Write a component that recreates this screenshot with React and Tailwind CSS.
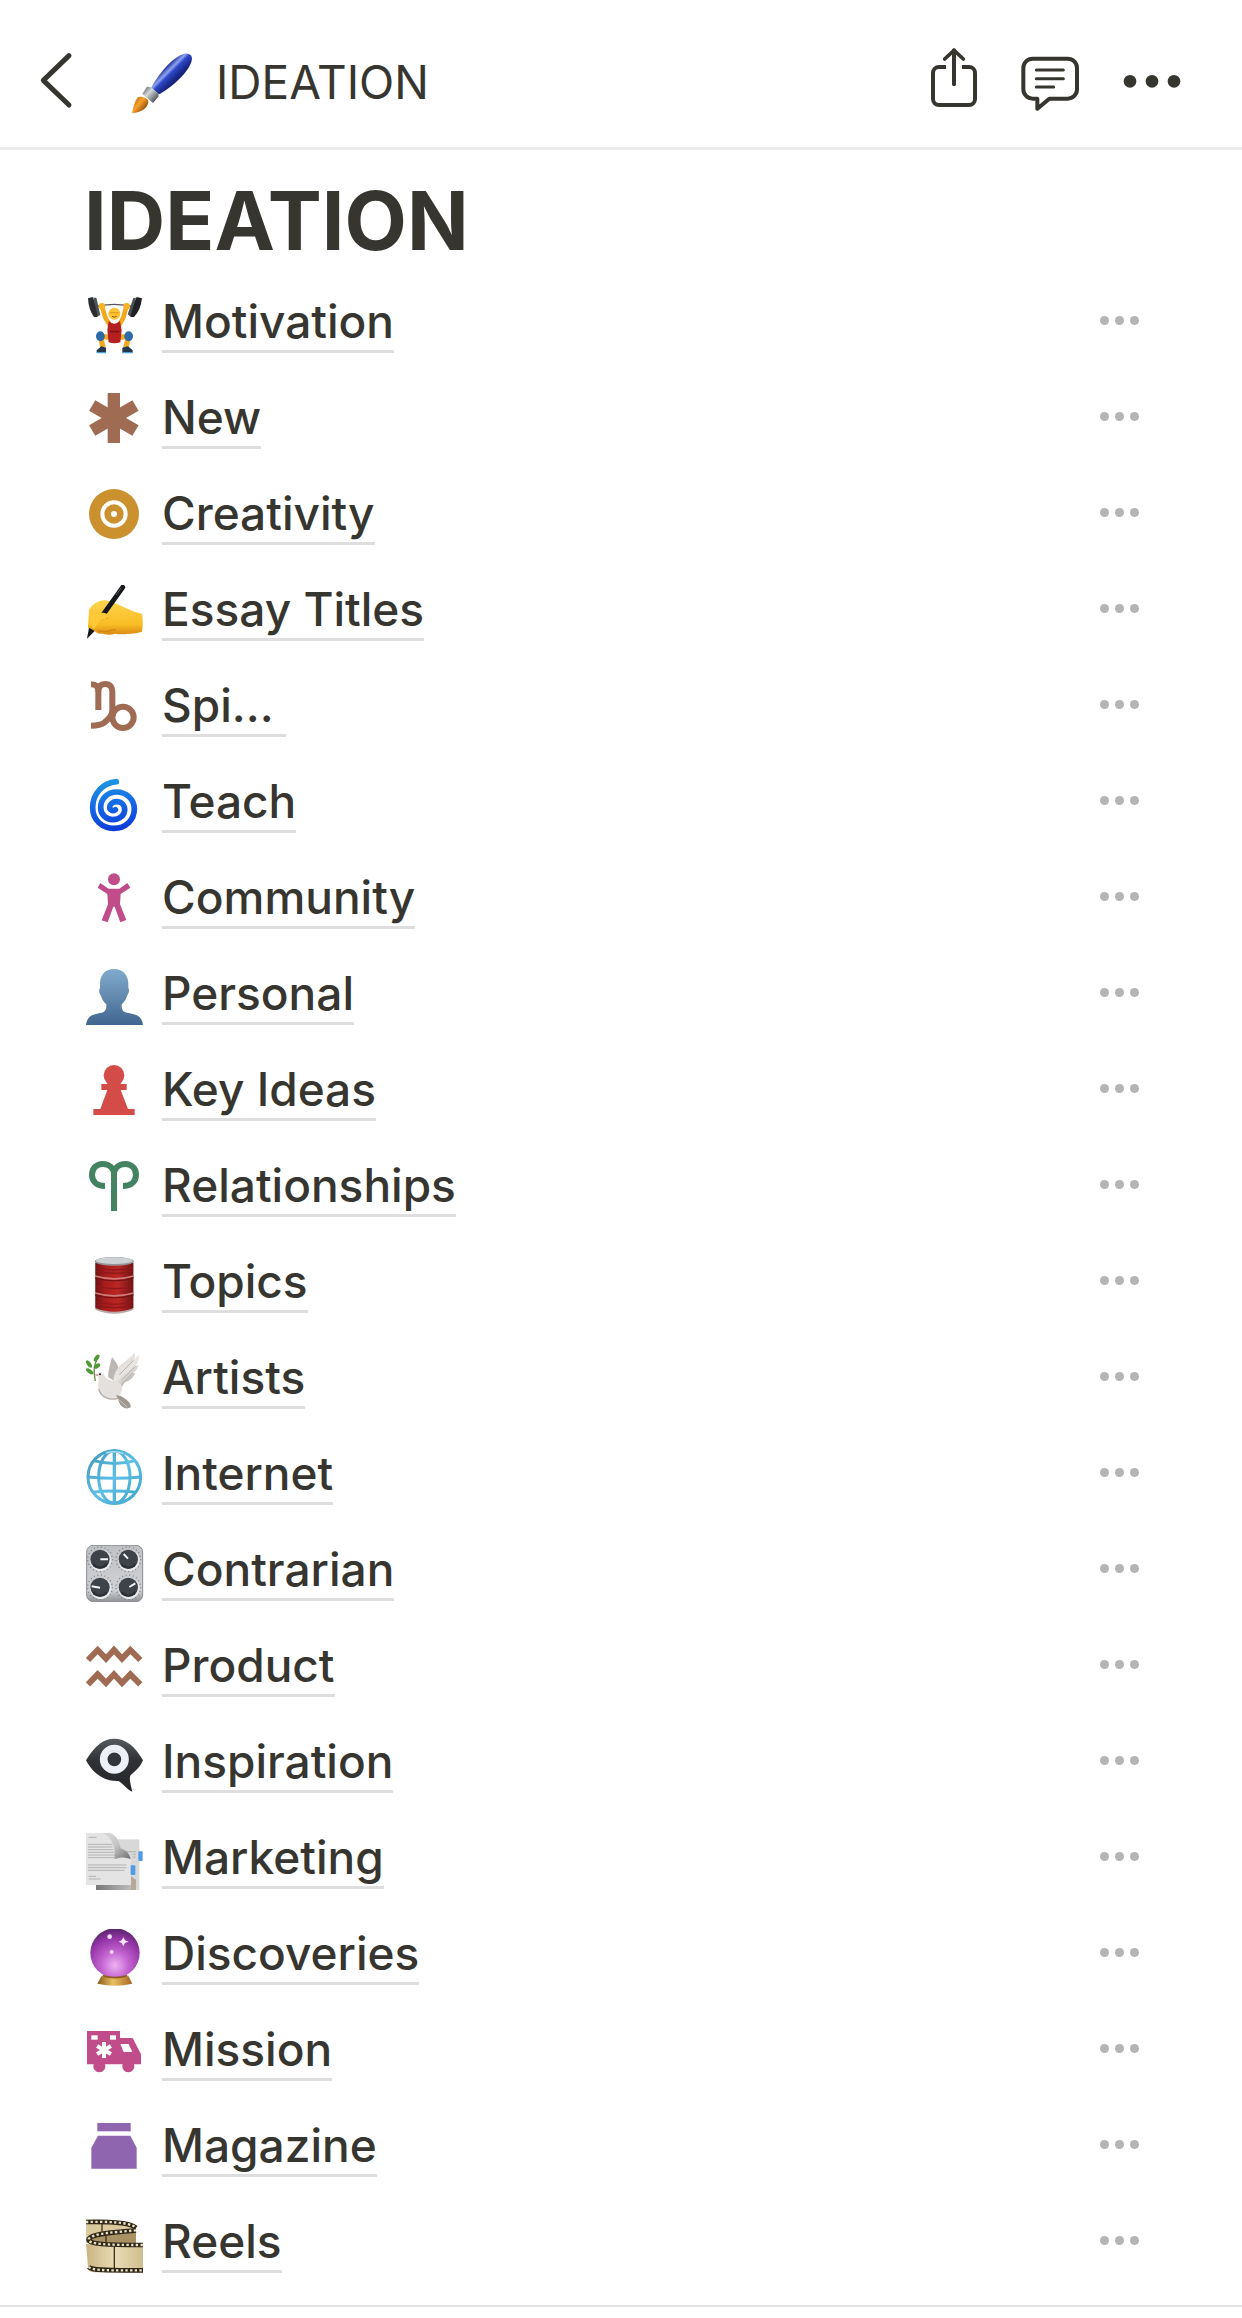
import React from 'react';

const Lifter = () => (
  <>
    <path d="M20 30 Q84 14 150 30" stroke="#55585c" strokeWidth="4" fill="none" />
    <path d="M6 4 L20 0 L40 50 L34 60 L24 60 Q8 40 6 4 Z" fill="#2b2d30" />
    <path d="M22 2 L31 2 L43 54 L35 58 Z" fill="#4d5054" />
    <path d="M168 4 L152 0 L128 50 L134 60 L144 60 Q164 40 168 4 Z" fill="#1f2123" />
    <path d="M150 2 L142 3 L125 52 L133 58 Z" fill="#4d5054" />
    <path d="M49 32 L58 62 L76 92 M120 32 L112 62 L95 92" stroke="#f2a91f" strokeWidth="14" fill="none" />
    <circle cx="48" cy="28" r="10" fill="#f5b325" />
    <circle cx="122" cy="28" r="10" fill="#f5b325" />
    <circle cx="85" cy="50" r="18" fill="#fcc434" />
    <path d="M72 47 H98" stroke="#e09a1a" strokeWidth="3" />
    <path d="M78 58 Q85 63 92 58" stroke="#8a5a10" strokeWidth="3" fill="none" />
    <path d="M46 118 L76 122 M126 118 L96 122 M45 122 L51 154 M127 122 L119 154" stroke="#f2a91f" strokeWidth="16" />
    <path d="M68 72 Q85 88 102 72 L107 100 L103 136 Q85 142 68 136 L64 100 Z" fill="#b4201f" />
    <path d="M72 104 H100" stroke="#7e1213" strokeWidth="5" />
    <ellipse cx="43" cy="118" rx="13" ry="15" fill="#2c6ba8" />
    <ellipse cx="128" cy="118" rx="13" ry="15" fill="#2c6ba8" />
    <path d="M32 160 L46 148 L60 152 V167 H32 Z M140 160 L126 148 L109 152 V167 H140 Z" fill="#22384f" />
    <path d="M32 167 H60 M109 167 H140" stroke="#4d9fd8" strokeWidth="4" />
  </>
);

const Asterisk = () => (
  <g fill="#9f6b53">
    <rect x="65" y="0" width="37" height="150" />
    <rect x="65" y="0" width="37" height="150" transform="rotate(60 83.500 75)" />
    <rect x="65" y="0" width="37" height="150" transform="rotate(-60 83.500 75)" />
  </g>
);

const Target = () => (
  <>
    <circle cx="84" cy="75" r="75" fill="#cb912f" />
    <circle cx="84" cy="75" r="35" fill="none" stroke="#fff" strokeWidth="12" />
    <circle cx="84" cy="75" r="9" fill="#fff" />
  </>
);

const WritingHand = () => (
  <>
    <defs>
      <linearGradient id="hand" x1="0" y1="0" x2="0" y2="1">
        <stop offset="0" stopColor="#ffd44d" />
        <stop offset="0.7" stopColor="#f9bd25" />
        <stop offset="1" stopColor="#d98b14" />
      </linearGradient>
    </defs>
    <path
      d="M9 76 C14 62 30 50 52 46 C66 44 90 56 108 64 C126 72 150 84 168 86 C171 104 171 124 168 140 C150 146 110 150 88 146 C76 150 62 150 52 146 C40 148 32 144 26 138 L6 128 Z"
      fill="url(#hand)"
    />
    <path d="M36 136 C50 146 70 136 90 134 M26 118 C38 104 50 102 66 98" stroke="#cf8616" strokeWidth="4" fill="none" />
    <path d="M110 7 L52 88" stroke="#15171a" strokeWidth="15" strokeLinecap="round" fill="none" />
    <path d="M9 128 L26 138 L3 161 Z" fill="#15171a" />
    <path d="M106 8 L90 30" stroke="#585b60" strokeWidth="3" />
    <path d="M14 88 C30 92 38 80 56 84 C74 88 70 102 50 104 C38 108 32 118 25 132 C14 126 10 108 14 88 Z" fill="#fdc936" />
  </>
);

const Capricorn = () => (
  <g fill="none" stroke="#9f6b53" strokeWidth="18">
    <path d="M15 10 C30 10 37 16 37 32 V87" />
    <path d="M37 32 C37 16 45 9 57 9 C72 9 79 18 79 32 V88 C79 106 66 116 56 124 C44 133 34 134 15 134" />
    <circle cx="111" cy="109" r="32" />
  </g>
);

const Cyclone = () => (
  <>
    <defs>
      <linearGradient id="cyclone" gradientUnits="userSpaceOnUse" x1="60" y1="5" x2="84" y2="162">
        <stop offset="0" stopColor="#1c9ae0" />
        <stop offset="0.5" stopColor="#1668e6" />
        <stop offset="1" stopColor="#0b3bd8" />
      </linearGradient>
    </defs>
    <path
      d="M91 14 C50 18 20 50 20 92 C20 130 50 154 83 154 C120 154 145 128 145 96 C145 66 120 45 92 45 C64 45 44 66 44 92 C44 114 62 128 80 128 C102 128 116 114 116 98 C116 84 106 74 92 74 C80 74 71 82 71 91 C71 99 80 104 88 98"
      fill="none"
      stroke="url(#cyclone)"
      strokeWidth="17"
      strokeLinecap="round"
    />
  </>
);

const Person = () => (
  <g fill="#c14c8a">
    <circle cx="84" cy="19" r="18" />
    <path d="M35 44 L43 30 L68 47 H100 L124 30 L133 44 L104 63 L102 94 L121 141 L103 148 L86 101 H82 L65 148 L47 142 L66 94 L64 63 Z" />
  </g>
);

const Bust = () => (
  <>
    <defs>
      <linearGradient id="bust" x1="0" y1="0" x2="0" y2="1">
        <stop offset="0" stopColor="#80abcc" />
        <stop offset="0.5" stopColor="#6489ae" />
        <stop offset="1" stopColor="#3f6590" />
      </linearGradient>
    </defs>
    <path
      d="M84 0 C110 0 127 18 127 44 V58 C131 60 129 74 123 80 C120 92 114 100 107 106 C106 120 110 128 122 131 C146 135 168 138 171 168 H0 C3 138 24 135 48 131 C58 128 62 120 61 106 C54 100 48 92 45 80 C39 74 38 60 42 58 V44 C42 18 58 0 84 0 Z"
      fill="url(#bust)"
    />
  </>
);

const Pawn = () => (
  <g fill="#d44c47">
    <circle cx="84" cy="31" r="31" />
    <path d="M64 50 H104 V57 H122 V75 H104 L126 132 H146 V150 H22 V132 H43 L64 75 H46 V57 H64 Z" />
  </g>
);

const Aries = () => (
  <g fill="none" stroke="#448361" strokeWidth="18">
    <path d="M57 75 C34 75 18 62 18 41 C18 22 32 9 50 9 C70 9 84 22 84 42 V150" />
    <path d="M111 75 C134 75 150 62 150 41 C150 22 136 9 118 9 C98 9 84 22 84 42" />
  </g>
);

const OilDrum = () => (
  <>
    <defs>
      <linearGradient id="drum" x1="0" y1="0" x2="1" y2="0">
        <stop offset="0" stopColor="#6f1213" />
        <stop offset="0.25" stopColor="#a81d1d" />
        <stop offset="0.6" stopColor="#bb2625" />
        <stop offset="1" stopColor="#701314" />
      </linearGradient>
    </defs>
    <path d="M28 14 H142 V158 Q85 182 28 158 Z" fill="#b9a9a6" />
    <path d="M28 18 H142 V153 Q85 176 28 153 Z" fill="url(#drum)" />
    <path d="M30 32 Q85 46 140 32 M30 42 Q85 56 140 42 M30 88 Q85 102 140 88 M30 134 Q85 150 140 134 M30 144 Q85 160 140 144" stroke="#8e1819" strokeWidth="4" fill="none" />
    <path d="M27 57 Q85 74 143 57 M27 108 Q85 125 143 108" stroke="#cc7d79" strokeWidth="5" fill="none" />
    <path d="M27 63 Q85 80 143 63 M27 114 Q85 131 143 114" stroke="#6f1112" strokeWidth="3" fill="none" />
    <ellipse cx="85" cy="13" rx="59" ry="13" fill="#93979a" />
    <ellipse cx="85" cy="11" rx="55" ry="10" fill="#cdd1d3" />
  </>
);

const Dove = () => (
  <>
    <defs>
      <linearGradient id="dove" x1="0" y1="0" x2="0.6" y2="1">
        <stop offset="0" stopColor="#d3d0cd" />
        <stop offset="0.6" stopColor="#e9e6e3" />
        <stop offset="1" stopColor="#aaa39c" />
      </linearGradient>
    </defs>
    <path d="M66 72 C66 52 74 30 78 11 C84 22 94 30 98 46 L84 84 Z" fill="#bbb7b4" />
    <path
      d="M82 84 C84 56 96 40 116 26 C130 16 140 8 145 0 C148 6 148 12 144 20 L158 6 C160 18 156 30 148 40 L158 36 C154 48 148 56 140 60 L148 60 C142 74 130 84 116 88 L106 106 Z"
      fill="url(#dove)"
    />
    <path d="M142 22 L100 66 M148 40 L108 80 M140 60 L108 94" stroke="#b3aeaa" strokeWidth="3" />
    <path d="M35 64 C38 55 50 55 54 66 C60 78 70 82 84 84 C100 86 112 94 108 112 L96 136 C70 144 44 132 38 108 C34 92 42 84 35 64 Z" fill="#e3e0dd" />
    <path d="M38 108 C44 132 70 144 96 136" stroke="#b5b0ac" strokeWidth="4" fill="none" />
    <path d="M90 126 L106 130 C122 140 136 150 134 163 C124 170 110 166 102 154 Z" fill="#9f9891" />
    <path d="M94 136 L124 162" stroke="#cbc5bf" strokeWidth="3" />
    <circle cx="42" cy="64" r="3" fill="#222" />
    <path d="M36 63 L25 65 L35 70 Z" fill="#c98a86" />
    <path d="M34 16 C24 36 22 52 28 84" stroke="#6a8a45" strokeWidth="4" fill="none" />
    <g fill="#4f9a35">
      <ellipse cx="32" cy="15" rx="6" ry="12" transform="rotate(35 32 15)" />
      <ellipse cx="9" cy="33" rx="6" ry="13" transform="rotate(-35 9 33)" />
      <ellipse cx="33" cy="39" rx="6" ry="11" transform="rotate(55 33 39)" />
      <ellipse cx="11" cy="55" rx="6" ry="13" transform="rotate(-55 11 55)" />
    </g>
  </>
);

const Globe = () => (
  <>
    <defs>
      <linearGradient id="globe" gradientUnits="userSpaceOnUse" x1="0" y1="0" x2="171" y2="171">
        <stop offset="0" stopColor="#3c93b4" />
        <stop offset="0.5" stopColor="#5dc0e6" />
        <stop offset="1" stopColor="#3f9fc8" />
      </linearGradient>
    </defs>
    <g fill="none" stroke="url(#globe)" strokeWidth="9">
      <circle cx="85" cy="84" r="79" />
      <ellipse cx="85" cy="84" rx="47" ry="79" />
      <path d="M85 4 V164" strokeWidth="10" />
      <path d="M22 35 Q85 52 148 35 M5 84 Q85 92 165 84 M20 130 Q85 122 150 130" />
    </g>
    <path d="M60 12 Q85 4 112 13" stroke="#aee4f7" strokeWidth="4" fill="none" />
  </>
);

const Knobs = () => (
  <>
    <defs>
      <linearGradient id="panel" x1="0" y1="0" x2="0" y2="1">
        <stop offset="0" stopColor="#bfc1c4" />
        <stop offset="0.8" stopColor="#cfd1d4" />
        <stop offset="1" stopColor="#8f9195" />
      </linearGradient>
    </defs>
    <rect x="2" y="1" width="168" height="169" rx="20" fill="url(#panel)" stroke="#8b8e92" strokeWidth="3" />
    {[[42, 43], [127, 43], [42, 127], [127, 127]].map(([x, y]) => (
      <g key={`${x}-${y}`}>
        <circle cx={x} cy={y} r="37" fill="none" stroke="#7c7f84" strokeWidth="4" strokeDasharray="3 8" />
        <circle cx={x + 2} cy={y + 3} r="32" fill="#e8eaec" />
        <circle cx={x} cy={y} r="29" fill="#3e4349" />
        <path d={`M${x - 20} ${y + 14} A24 24 0 0 0 ${x + 20} ${y + 14}`} stroke="#2b2e33" strokeWidth="6" fill="none" />
      </g>
    ))}
    <path d="M43 43 H66 M126 41 L113 27 M42 128 L17 124 M130 126 L148 115" stroke="#f4f5f6" strokeWidth="6" />
  </>
);

const Aquarius = () => (
  <g fill="none" stroke="#9f6b53" strokeWidth="18">
    <path d="M6 57 L35 27 L60 53 L84 27 L108 53 L133 27 L163 57" />
    <path d="M6 130 L35 100 L60 126 L84 100 L108 126 L133 100 L163 130" />
  </g>
);

const EyeBubble = () => (
  <>
    <defs>
      <linearGradient id="bubble" x1="0" y1="0" x2="0" y2="1">
        <stop offset="0" stopColor="#56595d" />
        <stop offset="0.4" stopColor="#303236" />
        <stop offset="1" stopColor="#232528" />
      </linearGradient>
    </defs>
    <path
      d="M0 70 C28 24 54 5 84 5 C118 5 146 26 171 70 C162 92 146 104 134 114 C128 124 134 142 139 164 C122 158 112 140 98 132 C52 134 20 108 0 70 Z"
      fill="url(#bubble)"
    />
    <circle cx="85" cy="67" r="32" fill="#313439" stroke="#eef0f7" strokeWidth="23" />
    <path d="M66 48 A28 28 0 0 1 104 48" stroke="#dfe2ec" strokeWidth="3" fill="none" />
  </>
);

const Papers = () => (
  <>
    <defs>
      <linearGradient id="curl" x1="0" y1="0" x2="1" y2="1">
        <stop offset="0" stopColor="#dcdcdc" />
        <stop offset="0.5" stopColor="#c4c4c4" />
        <stop offset="1" stopColor="#6e6e6e" />
      </linearGradient>
      <linearGradient id="shade" x1="0" y1="0" x2="1" y2="0">
        <stop offset="0" stopColor="#777" />
        <stop offset="1" stopColor="#bdbdbd" />
      </linearGradient>
    </defs>
    <rect x="30" y="19" width="130" height="152" fill="#d8d8d8" />
    <rect x="30" y="156" width="106" height="15" fill="url(#shade)" />
    <path d="M135 130 L150 140 V171 H135 Z" fill="#b7a99a" />
    <rect x="157" y="55" width="13" height="29" rx="3" fill="#4f9be6" />
    <path d="M0 0 H72 C84 12 88 28 86 48 C104 48 122 58 134 76 V156 H0 Z" fill="#e4e4e4" />
    <path d="M8 13 H32 M6 34 H80 M6 42 H80 M6 50 H82 M6 58 H84 M6 66 H88 M6 74 H96 M6 96 H122 M6 104 H122 M6 112 H116 M8 130 H30 M8 138 H44" stroke="#b2b2b2" strokeWidth="3" />
    <path d="M92 56 H150 M140 64 H150 M140 72 H150" stroke="#b4b4b4" strokeWidth="3" />
    <path d="M46 0 H72 C92 8 100 24 104 46 C118 50 130 60 134 78 C118 72 102 72 86 78 C88 46 82 12 46 0 Z" fill="url(#curl)" />
    <rect x="134" y="97" width="14" height="29" rx="3" fill="#4f9be6" />
  </>
);

const CrystalBall = () => (
  <>
    <defs>
      <radialGradient id="ball" cx="0.5" cy="0.75" r="0.8">
        <stop offset="0" stopColor="#efb3f4" />
        <stop offset="0.35" stopColor="#c263d0" />
        <stop offset="0.7" stopColor="#9234a5" />
        <stop offset="1" stopColor="#4a2259" />
      </radialGradient>
      <linearGradient id="stand" x1="0" y1="0" x2="1" y2="0">
        <stop offset="0" stopColor="#8a5a1c" />
        <stop offset="0.45" stopColor="#e8c063" />
        <stop offset="1" stopColor="#a4661f" />
      </linearGradient>
    </defs>
    <path d="M46 142 H128 L139 164 Q87 176 34 164 Z" fill="url(#stand)" />
    <circle cx="87" cy="72" r="74" fill="url(#ball)" />
    <path d="M50 140 Q87 152 124 140" stroke="#8f5c20" strokeWidth="5" fill="none" />
    <circle cx="71" cy="23" r="7" fill="#f6dcf8" />
    <circle cx="77" cy="69" r="6" fill="#f6dcf8" />
    <path d="M112 24 L117 34 L128 38 L117 42 L112 52 L107 42 L98 38 L107 34 Z" fill="#fbe6fc" />
  </>
);

const Ambulance = () => (
  <>
    <path d="M3 18 H102 V39 H140 L165 88 V118 H144 A18 18 0 1 1 110 118 H57 A18 18 0 1 1 23 118 H3 Z" fill="#c14c8a" />
    <g fill="#fff">
      <rect x="16" y="31" width="19" height="13" />
      <rect x="72" y="31" width="18" height="13" />
      <path d="M103 57 H128 L139 81 H113 Z" />
      <rect x="48" y="51" width="12" height="48" />
      <rect x="48" y="51" width="12" height="48" transform="rotate(60 54 75)" />
      <rect x="48" y="51" width="12" height="48" transform="rotate(-60 54 75)" />
    </g>
  </>
);

const Jar = () => (
  <g fill="#9065b0">
    <rect x="34" y="6" width="100" height="25" />
    <path d="M36 44 H133 L152 80 V143 H16 V80 Z" />
  </g>
);

const Film = () => (
  <>
    <defs>
      <linearGradient id="film" x1="0" y1="0" x2="1" y2="0">
        <stop offset="0" stopColor="#c9b483" />
        <stop offset="0.5" stopColor="#e9dcb4" />
        <stop offset="1" stopColor="#cfbd8e" />
      </linearGradient>
    </defs>
    <path d="M0 8 C60 8 130 8 150 28 V78 H0 Z" fill="#d9c99c" />
    <path d="M8 70 C8 50 60 46 150 42 V84 H12 Z" fill="#a89263" />
    <path d="M0 80 C40 86 120 84 171 84 V166 H30 C14 166 6 162 6 150 Z" fill="url(#film)" />
    <g fill="none" stroke="#2e2618" strokeWidth="14">
      <path d="M0 15 C60 14 130 14 150 32" />
      <path d="M150 40 C90 46 20 48 8 66 C4 82 60 84 171 84" />
      <path d="M8 150 C20 162 80 160 171 160" />
    </g>
    <g fill="none" stroke="#ece2c4" strokeWidth="7" strokeDasharray="7 7">
      <path d="M0 15 C60 14 130 14 150 32" />
      <path d="M150 40 C90 46 20 48 8 66 C4 82 60 84 171 84" />
      <path d="M8 150 C20 162 80 160 171 160" />
    </g>
    <path d="M85 90 V154 M48 20 V44 M60 56 V76" stroke="#3b301d" strokeWidth="4" />
  </>
);

const pages = [
  { title: 'Motivation', icon: Lifter },
  { title: 'New', icon: Asterisk },
  { title: 'Creativity', icon: Target },
  { title: 'Essay Titles', icon: WritingHand },
  { title: 'Spi...\u00a0', icon: Capricorn },
  { title: 'Teach', icon: Cyclone },
  { title: 'Community', icon: Person },
  { title: 'Personal', icon: Bust },
  { title: 'Key Ideas', icon: Pawn },
  { title: 'Relationships', icon: Aries },
  { title: 'Topics', icon: OilDrum },
  { title: 'Artists', icon: Dove },
  { title: 'Internet', icon: Globe },
  { title: 'Contrarian', icon: Knobs },
  { title: 'Product', icon: Aquarius },
  { title: 'Inspiration', icon: EyeBubble },
  { title: 'Marketing', icon: Papers },
  { title: 'Discoveries', icon: CrystalBall },
  { title: 'Mission', icon: Ambulance },
  { title: 'Magazine', icon: Jar },
  { title: 'Reels', icon: Film },
];

const Paintbrush = () => (
  <svg viewBox="0 0 204 204" className="size-[68px] shrink-0" aria-hidden="true">
    <defs>
      <linearGradient id="handle" gradientUnits="userSpaceOnUse" x1="112" y1="60" x2="144" y2="92">
        <stop offset="0" stopColor="#2739a8" />
        <stop offset="0.3" stopColor="#8fa3ee" />
        <stop offset="0.5" stopColor="#2f49c9" />
        <stop offset="1" stopColor="#16247e" />
      </linearGradient>
      <linearGradient id="ferrule" gradientUnits="userSpaceOnUse" x1="50" y1="122" x2="86" y2="156">
        <stop offset="0" stopColor="#6d7274" />
        <stop offset="0.35" stopColor="#d5dadb" />
        <stop offset="1" stopColor="#4a4e50" />
      </linearGradient>
      <linearGradient id="bristle" gradientUnits="userSpaceOnUse" x1="20" y1="150" x2="56" y2="180">
        <stop offset="0" stopColor="#c46a0a" />
        <stop offset="0.45" stopColor="#f8a12c" />
        <stop offset="1" stopColor="#8d4704" />
      </linearGradient>
    </defs>
    <path d="M70 119 C88 84 132 26 170 17 C188 14 196 26 190 42 C178 78 126 122 93 139 Z" fill="url(#handle)" />
    <path d="M57 116 L69 118 L92 138 L91 146 L75 165 L43 138 Z" fill="url(#ferrule)" />
    <path d="M30 148 C38 144 56 148 61 158 C62 176 44 194 12 195 C16 180 20 158 30 148 Z" fill="url(#bristle)" />
  </svg>
);

const TopBar = () => (
  <header className="flex items-center border-b-3 border-[#ececec] pt-4 pr-[50px] pl-[22px] h-[150px]">
    <button type="button" aria-label="Back" className="shrink-0">
      <svg viewBox="0 0 204 204" className="size-[68px]" fill="none" stroke="currentColor" strokeWidth="15" strokeLinecap="round" strokeLinejoin="round">
        <path d="M141 23 L64 97 L141 171" />
      </svg>
    </button>
    <div className="ml-[38px] flex min-w-0 flex-1 items-center gap-5">
      <Paintbrush />
      <span className="truncate text-[46px] leading-[62px]">IDEATION</span>
    </div>
    <div className="flex shrink-0 items-center gap-7">
      <button type="button" aria-label="Share">
        <svg viewBox="0 0 204 204" className="size-[68px] overflow-visible" fill="none" stroke="currentColor" strokeWidth="12">
          <path d="M78 57 H57 A18 18 0 0 0 39 75 V153 A18 18 0 0 0 57 171 H147 A18 18 0 0 0 165 153 V75 A18 18 0 0 0 147 57 H126" />
          <path d="M102 7 V109" strokeLinecap="round" />
          <path d="M74 33 L102 7 L130 33" strokeWidth="11" strokeLinecap="round" strokeLinejoin="round" />
        </svg>
      </button>
      <button type="button" aria-label="Comments">
        <svg viewBox="0 0 204 204" className="size-[68px]" fill="none" stroke="currentColor" strokeWidth="12" strokeLinejoin="round">
          <path d="M50 32 H155 A28 28 0 0 1 183 60 V124 A28 28 0 0 1 155 152 H100 L64 182 V152 H50 A28 28 0 0 1 22 124 V60 A28 28 0 0 1 50 32 Z" />
          <path d="M61 66 H142 M61 92 H142 M61 117 H113" strokeWidth="9" strokeLinecap="round" />
        </svg>
      </button>
      <button type="button" aria-label="More">
        <svg viewBox="0 0 240 204" className="h-[68px] w-20" fill="currentColor">
          <circle cx="54" cy="100" r="19" />
          <circle cx="120" cy="100" r="19" />
          <circle cx="186" cy="100" r="19" />
        </svg>
      </button>
    </div>
  </header>
);

const PageRow = ({ title, icon: Icon }) => (
  <li className="flex h-24 items-start pt-4">
    <svg viewBox="0 0 171 171" className="mt-1 h-[57px] w-[61px] shrink-0" aria-hidden="true">
      <Icon />
    </svg>
    <a href="#" className="ml-[17px] border-b-3 border-[#dedede] text-[46px] leading-[57px] font-medium whitespace-nowrap">
      {title}
    </a>
    <button type="button" aria-label={`More options for ${title.trim()}`} className="ml-auto flex h-[54px] w-[78px] items-center justify-center gap-[6px]">
      <span className="size-[9px] rounded-full bg-[#b4b4b4]" />
      <span className="size-[9px] rounded-full bg-[#b4b4b4]" />
      <span className="size-[9px] rounded-full bg-[#b4b4b4]" />
    </button>
  </li>
);

const App = () => {
  return (
    <div className="bg-white font-['Inter',sans-serif] text-[#37352f]">
      <TopBar />
      <main className="border-b-2 border-[#e2e2e2] px-[84px] pt-4 pb-3">
        <h1 className="text-[81px] leading-[111px] font-bold">IDEATION</h1>
        <ul>
          {pages.map((page) => (
            <PageRow key={page.title} title={page.title} icon={page.icon} />
          ))}
        </ul>
      </main>
    </div>
  );
};

export default App;
